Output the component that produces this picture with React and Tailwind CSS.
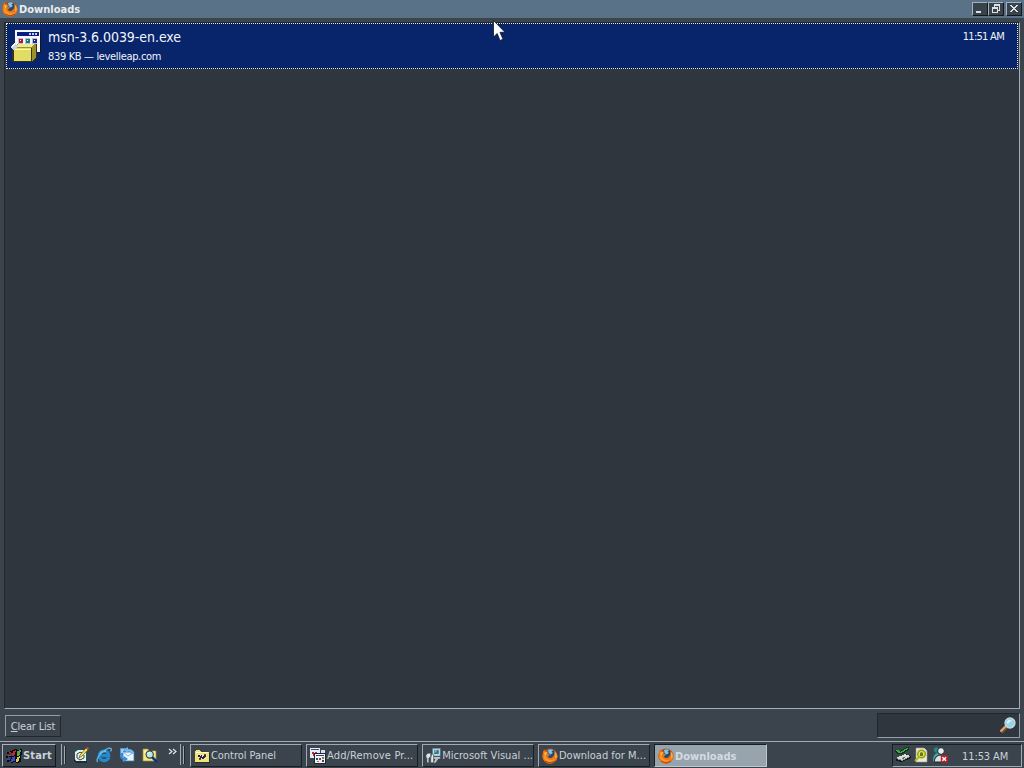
const FirefoxIcon = () => (
  <svg width="16" height="16" viewBox="0 0 16 16" className="shrink-0">
    <circle cx="8" cy="8" r="7.6" fill="#c94f0a" />
    <circle cx="8.8" cy="6.4" r="5.2" fill="#234a7c" />
    <path d="M6 2.2Q8.5 .5 11.5 2.2L9.5 3.2 10.8 5 8.6 6.6 6.6 5Z" fill="#83c4e5" />
    <path d="M1 3.8 2.2 1.2 3.4 3.2 6 3.4 5.6 5.2 8 6.4 6.8 7.8 5.8 8.4Q7 10.6 9.3 9.9 12 9 12.6 5.6L12 2.4Q15.4 5 15.6 8.3 15 14.8 8.2 15.7 1.2 15.2.4 8.5Z" fill="#ec7415" />
    <path d="M1.6 8.4Q2.4 13 7.6 14 12 13.6 13.8 10 11 12.4 8 11.8 4 11.2 3 6Z" fill="#f59a28" />
    <path d="M2.2 4.4 5.2 4.2 4.2 6 3.2 8Z" fill="#ffc452" />
    <path d="M12.6 3.4Q15 5.6 14.6 9L13.2 10.4Q13.9 6 12.6 3.4Z" fill="#ffce50" />
    <path d="M3 13.4Q8 16.4 13 13.4" fill="none" stroke="#a53c0c" strokeWidth=".8" />
  </svg>
)

const InstallerIcon = () => (
  <svg width="32" height="32" viewBox="0 0 32 32" shapeRendering="crispEdges">
    <path d="M6 1h25v22H6z" fill="#101828" />
    <path d="M5 0h25v22H5z" fill="#f4f6f8" />
    <path d="M7 2h22v4H7z" fill="#0a1c86" />
    <path d="M19 3h2v2h-2zM22 3h2v2h-2zM25 3h2v2h-2z" fill="#c8d4e8" />
    <path d="M8 8h5v6H8zM15 8h5v6h-5zM22 8h5v6h-5z" fill="#b7c4d2" />
    <path d="M9 9h4v4H9z" fill="#b81830" />
    <path d="M16 9h4v4h-4z" fill="#16777c" />
    <path d="M23 9h4v4h-4z" fill="#1c2894" />
    <path d="M10 10h1v1h-1zM17 10h1v1h-1zM24 10h1v1h-1z" fill="#fff" />
    <path d="M2 19 8 14H27V27L22 32H2Z" fill="#34351c" />
    <path d="M3 18 8 14H26L22 18Z" fill="#99922d" />
    <path d="M4 18H21V31H4Z" fill="#e2dc62" />
    <path d="M22 18 26 14V27L22 31Z" fill="#9a922a" />
    <path d="M5 17 8 14H24L21 17Z" fill="#eeea94" />
    <path d="M4 19H21V20H4Z" fill="#fffcb0" />
    <path d="M0 17 4 13 8 17 4 20Z" fill="#c9d5db" />
    <path d="M1 16 4 13 5 14 2 17Z" fill="#fff" />
  </svg>
)

const WindowsIcon = () => (
  <svg width="17" height="16" viewBox="0 0 17 16" shapeRendering="crispEdges">
    <path d="M1 4h2v2H1zM0 8h2v2H0zM1 12h2v2H1zM4 3h2v2H4zM3 7h2v2H3zM3 11h2v2H3zM6 2 10 1 12 2 16 1 15 14 11 15 9 14 5 15Z" fill="#080b0f" />
    <path d="M7 3 10 2 9 7 6 8ZM3 4h2v1H3zM2 7h3v1H2z" fill="#c42a2c" />
    <path d="M11 3 15 2 14 7 11 8Z" fill="#5aa544" />
    <path d="M6 9 9 8 9 13 5 14ZM1 11h3v1H1z" fill="#304fc9" />
    <path d="M11 9 14 8 13 13 10 14Z" fill="#e0cc45" />
  </svg>
)

const DesktopIcon = () => (
  <svg width="16" height="16" viewBox="0 0 16 16">
    <path d="M1 2H15V15H1Z" fill="#1d5259" />
    <path d="M2 5 5 3H13V14H3L2 12Z" fill="#e9f1ef" />
    <path d="M4 7Q7 4 10 6M4 7V11L7 13 11 11V8" fill="none" stroke="#39423f" />
    <path d="M6 11 7 8 13 1 15 3 9 9Z" fill="#f6d94c" stroke="#493f20" strokeWidth=".6" />
    <path d="M13 1 15 3 16 1 14 0Z" fill="#d64e30" />
    <path d="M1 13 3 15H14" stroke="#0b1217" fill="none" />
  </svg>
)

const ExplorerIcon = () => (
  <svg width="16" height="16" viewBox="0 0 16 16">
    <path d="M13 10.5Q11.3 13.6 7.8 13.6 3.4 13.2 3.2 8.8 3.6 4.4 8 4 12.6 4.4 12.7 8.6H5.2" fill="none" stroke="#2589cf" strokeWidth="3.2" />
    <path d="M4 7Q6 3.5 10 4.2" fill="none" stroke="#8ed8f5" strokeWidth="1.2" />
    <path d="M2 15Q-1 13 5 6.5 12-.3 15 1.5 15.8 2.3 14.5 4.5" fill="none" stroke="#60b7e8" strokeWidth="1.3" />
  </svg>
)

const OutlookIcon = () => (
  <svg width="16" height="16" viewBox="0 0 16 16">
    <path d="M1 1H8V8H1Z" fill="#4f97d8" />
    <path d="M4 5H15V14H4Z" fill="#e9f5fb" stroke="#3f78b8" strokeWidth=".8" />
    <path d="M4 5 9 9 15 5" fill="none" stroke="#8fb4d3" />
    <path d="M1 6Q0 12 5 13L4 15.5 9 12 5 9V11Q3.4 10 4 6Z" fill="#3a8cd6" />
    <path d="M15 7Q15 2 9 2V0L5 3 9 6V4.4Q12 4.4 12 7Z" fill="#72b9ea" />
    <path d="M2 3H5M2 5H4" stroke="#fff" />
  </svg>
)

const SearchFolderIcon = () => (
  <svg width="16" height="16" viewBox="0 0 16 16">
    <path d="M1 2H6L7 4H14V14H1Z" fill="#f4e77f" stroke="#9b9137" strokeWidth=".7" />
    <path d="M2 5H13" stroke="#fffbd3" />
    <path d="M10 10 15 15" stroke="#12328a" strokeWidth="2.5" />
    <circle cx="7.7" cy="7.5" r="3.6" fill="#b8e7e9" stroke="#303d42" strokeWidth="1.1" />
    <path d="M6 7Q6 5.7 8 5.5" fill="none" stroke="#fff" />
  </svg>
)

const ControlPanelIcon = () => (
  <svg width="16" height="16" viewBox="0 0 16 16" shapeRendering="crispEdges">
    <path d="M1 3H2V2H6L7 4H15V14H1Z" fill="#f1e475" />
    <path d="M2 4H14V5H2Z" fill="#fffac7" />
    <path d="M4 6H13V12H4Z" fill="#e6e4b0" />
    <path d="M4 7H6V8H7V7H8V9H9V8H10V7H12V9H11V10H10V11H8V10H7V11H5V10H6V9H4Z" fill="#292c2c" />
    <path d="M10 6H12V7H10ZM5 11H7V12H5Z" fill="#b33326" />
    <path d="M1 14H15V5" fill="none" stroke="#2c2e25" />
  </svg>
)

const ProgramsIcon = () => (
  <svg width="16" height="16" viewBox="0 0 16 16" shapeRendering="crispEdges">
    <path d="M0 0H10V10H0Z" fill="#e9edf1" />
    <path d="M1 1H9V2H1Z" fill="#344e91" />
    <path d="M2 4H4V6H2ZM5 4H7V5H5ZM3 6H5V8H3Z" fill="#b62737" />
    <path d="M11 2H15V5H11Z" fill="#dce0e2" />
    <path d="M4 5H16V16H4Z" fill="#20262b" />
    <path d="M5 6H15V15H5Z" fill="#eef2f4" />
    <path d="M6 7H14V8H6Z" fill="#25458c" />
    <path d="M6 10H8V12H6ZM12 12H14V14H12Z" fill="#1c4f83" />
    <path d="M9 10H11V12H9Z" fill="#b52b3a" />
    <path d="M12 9H14V11H12ZM7 13H9V14H7Z" fill="#7a8d2f" />
  </svg>
)

const SetupIcon = () => (
  <svg width="16" height="16" viewBox="0 0 16 16">
    <path d="M7 0H15V8H7Z" fill="#d6e0e4" stroke="#69818c" strokeWidth=".6" />
    <path d="M8.5 1.5H13.5V6H8.5Z" fill="#287d94" />
    <path d="M9 2H12L9 5Z" fill="#7fc6d6" />
    <path d="M6 9H15V11H13L10 15H8L10 11H6Z" fill="#bcc6ca" />
    <path d="M0 7 2 5H5V9L3 10V15H1V10H0ZM6 6H8V15H5V10Z" fill="#dce5e8" stroke="#3e4950" strokeWidth=".6" />
  </svg>
)

const MagnifierIcon = () => (
  <svg width="18" height="18" viewBox="0 0 18 18">
    <path d="M8 9 2 15" stroke="#775432" strokeWidth="4" />
    <path d="M7 9 1.5 14.5" stroke="#dca96a" strokeWidth="2" />
    <circle cx="11" cy="6" r="5" fill="#95d5ef" stroke="#cbd7dd" strokeWidth="1.3" />
    <path d="M8 6Q8 3 11 3L13 4Q10 4 9 7Z" fill="#edfaff" />
  </svg>
)

const EjectIcon = () => (
  <svg width="16" height="16" viewBox="0 0 16 16" shapeRendering="crispEdges">
    <path d="M0 3H3L5 4 12 0H14V3L7 7H2L0 5Z" fill="#0e3512" />
    <path d="M1 3H3L5 5 12 1H13V2L6 6H3Z" fill="#39ae45" />
    <path d="M1 12 10 7 16 9V11L7 15 1 14Z" fill="#14191b" />
    <path d="M1 11 10 7 15 9 7 13Z" fill="#d8ded7" />
    <path d="M2 12 7 14 15 10V9L7 13 2 11Z" fill="#8a9891" />
    <path d="M6 11 9 10 10 11 7 12Z" fill="#65716d" />
  </svg>
)

const PageSearchIcon = () => (
  <svg width="14" height="16" viewBox="0 0 14 16">
    <path d="M2 1H10L13 4V15H2Z" fill="#e9ecd0" stroke="#9aa08e" strokeWidth=".6" />
    <circle cx="7.5" cy="7" r="3.8" fill="#dde653" stroke="#94a016" strokeWidth="1.5" />
    <path d="M5 10 1 14" stroke="#b0b917" strokeWidth="2" />
    <path d="M6 9V6L7.5 5 9 6V9Z" fill="#6c7612" />
    <path d="M10 1V4H13" fill="#fff" stroke="#9aa08e" strokeWidth=".6" />
  </svg>
)

const OfflineUserIcon = () => (
  <svg width="16" height="16" viewBox="0 0 16 16">
    <circle cx="4.6" cy="3" r="2.8" fill="#268683" />
    <path d="M1 14Q1 7 5 6L9 8V15H1Z" fill="#43a49a" />
    <path d="M2 15Q3 8 9 8 14 8 14 15Z" fill="#d8e3e5" stroke="#192327" />
    <circle cx="9" cy="4" r="3.4" fill="#e5edf0" stroke="#192327" />
    <path d="M8.8 8.4H15.6V15.6H8.8Z" fill="#c81f2c" />
    <path d="M10.4 10.2 14 13.8M14 10.2 10.4 13.8" stroke="#fff" strokeWidth="1.4" />
  </svg>
)

const CaptionButton = ({ children }) => (
  <div className="h-[14px] w-4 bg-[#39434b] border border-t-[#a3b2bd] border-l-[#a3b2bd] border-r-[#11171c] border-b-[#11171c]">
    <svg width="14" height="12" viewBox="0 0 14 12" fill="none" stroke="#dae1e6" shapeRendering="crispEdges">{children}</svg>
  </div>
)

const tasks = [
  { label: 'Control Panel', icon: <ControlPanelIcon />, spacing: 'tracking-[-0.05px]' },
  { label: 'Add/Remove Pr...', icon: <ProgramsIcon />, spacing: 'tracking-[0.15px]' },
  { label: 'Microsoft Visual ...', icon: <SetupIcon />, spacing: 'tracking-[0.03px]' },
  { label: 'Download for M...', icon: <FirefoxIcon />, spacing: 'tracking-[0px]' },
]

const App = () => {
  return (
    <div className="relative w-[1024px] h-[768px] overflow-hidden flex flex-col bg-[#3b444d] text-[#c9d2d9] font-['DejaVu_Sans_Condensed','DejaVu_Sans',sans-serif] text-[11px] leading-[14px] whitespace-nowrap cursor-default">
      <header className="h-[18px] shrink-0 bg-[#5a7288] flex items-center pl-[2px] pr-[2px]">
        <FirefoxIcon />
        <span className="ml-px mt-px font-bold text-[#e8edf0] tracking-[0.02px]">Downloads</span>
        <div className="ml-auto flex">
          <CaptionButton><path d="M3 9H8M3 8H8" /></CaptionButton>
          <CaptionButton><path d="M5 1.5H11M5 2.5H11M5.5 1V4M10.5 1V7.5H9M3 4.5H8M3 5.5H8M3.5 4V9.5H8.5V4" /></CaptionButton>
          <div className="w-[2px]" />
          <CaptionButton><path d="M3 2 10 9M4 2 11 9M10 2 3 9M11 2 4 9" shapeRendering="auto" /></CaptionButton>
        </div>
      </header>

      <main className="mt-[4px] ml-[4px] w-[1016px] h-[687px] shrink-0 bg-[#2f363e] border border-t-[#20272d] border-l-[#20272d] border-r-[#a3afb8] border-b-[#a3afb8] pl-px">
        <div className="w-[1012px] h-[46px] bg-[#08246b] border border-dotted border-[#e1e5dd] flex text-[#f0f5fa]">
          <div className="pt-[6px] pl-[4px] -ml-px"><InstallerIcon /></div>
          <div className="pl-[6px] pt-[5px]">
            <div className="text-[14px] leading-[17px] tracking-[-0.05px]">msn-3.6.0039-en.exe</div>
            <div className="mt-[4px] leading-[14px] tracking-[-0.34px]">839 KB — levelleap.com</div>
          </div>
          <div className="ml-auto pt-[6px] pr-[13px] tracking-[-0.72px]">11:51 AM</div>
        </div>
      </main>

      <div className="h-[32px] shrink-0 flex pl-[5px] pr-[4px]">
        <button className="mt-[6px] w-[56px] h-[22px] pt-[2px] border border-t-[#929da6] border-l-[#929da6] border-r-[#20272d] border-b-[#20272d] tracking-[-0.2px]">
          <span className="underline">C</span>lear List
        </button>
        <div className="ml-auto mt-[4px] w-[143px] h-[25px] bg-[#2f363e] border border-t-[#20272d] border-l-[#20272d] border-r-[#929da6] border-b-[#929da6] flex items-center justify-end pr-[2px]">
          <MagnifierIcon />
        </div>
      </div>

      <footer className="h-[27px] shrink-0 border-t border-[#a0aab2] pt-[2px] flex pl-[2px] pr-[2px]">
        <button className="w-[54px] h-[23px] border border-t-[#aab4bc] border-l-[#aab4bc] border-r-[#12181d] border-b-[#12181d] flex items-center pl-[3px] font-bold">
          <WindowsIcon />
          <span className="tracking-[0.15px]">Start</span>
        </button>
        <div className="ml-[5px] w-px h-[21px] bg-[#a0aab2]" />
        <div className="ml-[2px] w-[2px] h-[18px] mt-[2px] border-l border-[#a0aab2] border-r border-r-[#20272d]" />
        <div className="ml-[7px] mt-[3px] flex gap-[7px]">
          <DesktopIcon />
          <ExplorerIcon />
          <OutlookIcon />
          <SearchFolderIcon />
        </div>
        <svg width="9" height="8" viewBox="0 0 9 8" className="ml-[10px] mt-[4px]" fill="none" stroke="#e0e7ec" strokeWidth="1.2"><path d="M1 1 4 3.5 1 6M5 1 8 3.5 5 6" /></svg>
        <div className="ml-[3px] w-px h-[21px] bg-[#a0aab2]" />
        <div className="ml-[2px] w-[2px] h-[18px] mt-[2px] border-l border-[#a0aab2] border-r border-r-[#20272d]" />
        <div className="ml-[5px] flex gap-[4px]">
          {tasks.map(task => (
            <div key={task.label} className="w-[112px] h-[23px] border border-t-[#a0aab2] border-l-[#a0aab2] border-r-[#171e24] border-b-[#171e24] flex items-center pl-[3px] gap-px">
              {task.icon}
              <span className={task.spacing}>{task.label}</span>
            </div>
          ))}
        </div>
        <div className="ml-[4px] w-[113px] h-[23px] bg-[#98a4ad] border border-t-[#171e24] border-l-[#171e24] border-r-[#c0c8ce] border-b-[#c0c8ce] flex items-center pl-[3px] pt-px font-bold">
          <FirefoxIcon />
          <span className="ml-px mt-px tracking-[0.05px] text-[#d4dbe0]">Downloads</span>
        </div>
        <div className="ml-auto w-[130px] h-[23px] border border-t-[#171e24] border-l-[#171e24] border-r-[#a0aab2] border-b-[#a0aab2] flex items-center pl-[2px]">
          <div className="-mt-px"><EjectIcon /></div>
          <div className="ml-[3px] -mt-[2px]"><PageSearchIcon /></div>
          <div className="ml-[4px] -mt-px"><OfflineUserIcon /></div>
          <span className="ml-[14px] mt-[3px] tracking-[-0.1px]">11:53 AM</span>
        </div>
      </footer>

      <svg width="13" height="22" viewBox="0 0 13 22" className="absolute left-[493px] top-[20px]">
        <path d="M.5.5V17L4.2 13.5 7 20.5 10 19.2 7 12.3H12Z" fill="#fff" stroke="#101827" strokeWidth=".8" />
      </svg>
    </div>
  )
}

export default App
